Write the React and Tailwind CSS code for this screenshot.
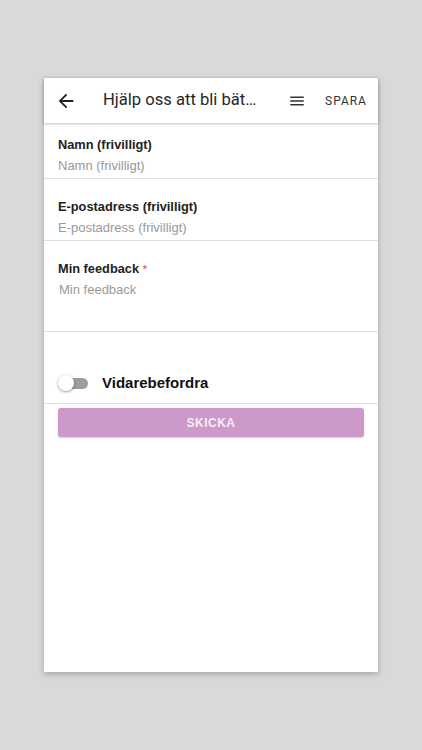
import React from "react";

export default function App() {
  return (
    <div className="w-[422px] h-[750px] bg-[#d9d9d9] pt-[78px] pl-[44px]" style={{ fontFamily: '"Liberation Sans", Arial, sans-serif' }}>
      <div className="w-[334px] h-[594px] bg-white shadow-[0_2px_6px_rgba(0,0,0,0.25)] flex flex-col">
        <div className="h-[45px] flex items-center shadow-[0_1px_3px_rgba(0,0,0,0.25)] relative z-10" style={{ fontFamily: 'Roboto, "Liberation Sans", sans-serif' }}>
          <div className="ml-[11px] w-[22px] h-[22px] flex">
            <svg width="22" height="22" viewBox="0 0 24 24"><path d="M20 11H7.83l5.59-5.59L12 4l-8 8 8 8 1.41-1.41L7.83 13H20v-2z" fill="#222" /></svg>
          </div>
          <div className="ml-[26px] text-[16.6px] text-[#262626] w-[160px] whitespace-nowrap overflow-hidden">Hjälp oss att bli bät…</div>
          <div className="ml-[25px] flex items-center">
            <svg width="18" height="18" viewBox="0 0 24 24"><path d="M3 18h18v-2H3v2zm0-5h18v-2H3v2zm0-7v2h18V6H3z" fill="#333" /></svg>
          </div>
          <div className="ml-[19px] text-[12px] tracking-[1px] text-[#333]">SPARA</div>
        </div>
        <div className="h-[56px] border-b border-[#e0e0e0] pl-[14px] pt-[14px]">
          <div className="text-[12.8px] font-bold text-[#222] leading-[16px]">Namn (frivilligt)</div>
          <div className="text-[13px] text-[#999] leading-[16px] mt-[5px]">Namn (frivilligt)</div>
        </div>
        <div className="h-[62px] border-b border-[#e0e0e0] pl-[14px] pt-[20px]">
          <div className="text-[12.8px] font-bold text-[#222] leading-[16px]">E-postadress (frivilligt)</div>
          <div className="text-[13px] text-[#999] leading-[16px] mt-[5px]">E-postadress (frivilligt)</div>
        </div>
        <div className="h-[91px] border-b border-[#e0e0e0] pl-[14px] pt-[20px]">
          <div className="text-[12.8px] font-bold text-[#222] leading-[16px]">Min feedback <span className="text-[#e57373] text-[11px] align-top">*</span></div>
          <div className="text-[13px] text-[#999] leading-[16px] mt-[5px] pl-[1px]">Min feedback</div>
        </div>
        <div className="h-[72px] border-b border-[#e0e0e0] flex items-end pb-[12px] pl-[14px]">
          <div className="relative w-[31px] h-[16px] flex items-center">
            <div className="w-[28px] h-[11px] rounded-full bg-[#9e9e9e] ml-[2px]" />
            <div className="absolute left-0 top-0 w-[16px] h-[16px] rounded-full bg-white shadow-[0_1px_3px_rgba(0,0,0,0.4)]" />
          </div>
          <div className="ml-[13px] text-[15px] font-bold text-[#111] leading-[16px]">Vidarebefordra</div>
        </div>
        <div className="px-[14px] pt-[4px]">
          <div className="h-[29px] rounded-[3px] bg-[#cc99c9] shadow-[0_1px_2px_rgba(0,0,0,0.2)] flex items-center justify-center text-[#f6ecf5] text-[12px] font-bold tracking-[0.5px]">SKICKA</div>
        </div>
      </div>
    </div>
  );
}
